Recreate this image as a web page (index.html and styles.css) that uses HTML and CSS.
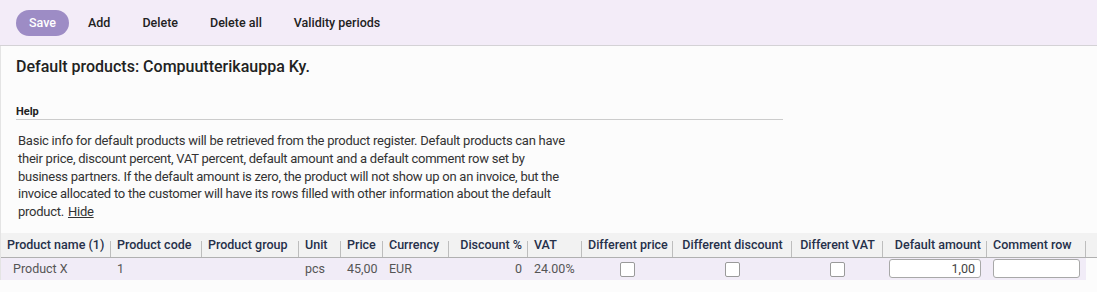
FILE: index.html
```html
<!DOCTYPE html>
<html lang="en">
<head>
<meta charset="utf-8">
<title>Default products</title>
<link rel="stylesheet" href="styles.css">
</head>
<body>
<div class="toolbar">
  <button class="btn btn-primary">Save</button>
  <button class="btn">Add</button>
  <button class="btn">Delete</button>
  <button class="btn">Delete all</button>
  <button class="btn">Validity periods</button>
</div>
<div class="page">
  <div class="content">
    <h1 class="title">Default products: Compuutterikauppa Ky.</h1>
    <div class="help">
      <div class="help-head">Help</div>
      <p class="help-text">Basic info for default products will be retrieved from the product register. Default products can have their price, discount percent, VAT percent, default amount and a default comment row set by business partners. If the default amount is zero, the product will not show up on an invoice, but the invoice allocated to the customer will have its rows filled with other information about the default product.<a class="hide-link" href="#">Hide</a></p>
    </div>
  </div>
  <table class="grid">
    <colgroup>
      <col style="width:110px"><col style="width:91px"><col style="width:97px"><col style="width:42px"><col style="width:42px"><col style="width:66px"><col style="width:79px"><col style="width:54px"><col style="width:91px"><col style="width:119px"><col style="width:91px"><col style="width:104px"><col style="width:99px"><col>
    </colgroup>
    <thead>
      <tr>
        <th>Product name (1)</th>
        <th>Product code</th>
        <th>Product group</th>
        <th>Unit</th>
        <th>Price</th>
        <th>Currency</th>
        <th class="r">Discount %</th>
        <th>VAT</th>
        <th class="c">Different price</th>
        <th class="c">Different discount</th>
        <th class="c">Different VAT</th>
        <th class="r">Default amount</th>
        <th>Comment row</th>
        <th class="gutter"></th>
      </tr>
    </thead>
    <tbody>
      <tr>
        <td class="first">Product X</td>
        <td>1</td>
        <td></td>
        <td>pcs</td>
        <td>45,00</td>
        <td>EUR</td>
        <td class="r">0</td>
        <td>24.00%</td>
        <td class="c"><span class="check"></span></td>
        <td class="c"><span class="check"></span></td>
        <td class="c"><span class="check"></span></td>
        <td class="inp"><input class="field num" type="text" value="1,00"></td>
        <td class="inp"><input class="field" type="text" value=""></td>
        <td class="gutter"></td>
      </tr>
    </tbody>
  </table>
</div>
</body>
</html>
```
FILE: styles.css
```css
html, body {
  margin: 0;
  padding: 0;
  background: #fcfcfc;
  font-family: Roboto, "Open Sans", sans-serif;
  color: #222;
}

.toolbar {
  height: 45px;
  background: #f3ecf8;
  border-bottom: 1px solid #d4d2d6;
  display: flex;
  align-items: center;
  padding-left: 16px;
}

.btn {
  font-family: inherit;
  font-size: 12.5px;
  font-weight: 500;
  color: #222;
  background: transparent;
  border: 0;
  height: 26px;
  padding: 0 16px;
  cursor: pointer;
}

.btn-primary {
  background: #9d8cc5;
  color: #fff;
  border-radius: 13px;
  width: 53px;
  padding: 0;
  margin-right: 3px;
}

.page {
  border-left: 1px solid #e4e4e4;
}

.content {
  padding: 0 15px;
}

.title {
  margin: 0;
  padding-top: 11px;
  font-size: 16px;
  font-weight: 500;
  line-height: 20px;
  color: #222;
}

.help {
  width: 767px;
  margin-top: 27px;
}

.help-head {
  font-size: 11px;
  font-weight: 700;
  line-height: 15px;
  padding-bottom: 0;
  border-bottom: 1px solid #cccccc;
}

.help-text {
  margin: 12px 0 0 2px;
  width: 556px;
  font-size: 13px;
  letter-spacing: -0.25px;
  line-height: 17.8px;
  color: #333;
}

.hide-link {
  margin-left: 4px;
  color: #333;
  text-decoration: underline;
}

.grid {
  margin-top: 12px;
  width: 100%;
  border-collapse: collapse;
  table-layout: fixed;
  font-size: 12.5px;
}

.grid th {
  background: #f2f2f2;
  font-weight: 500;
  color: #26304a;
  text-align: left;
  height: 24px;
  padding: 0 6px;
  white-space: nowrap;
  border-bottom: 1px solid #b0b0b0;
  position: relative;
}

.grid th::after {
  content: "";
  position: absolute;
  right: 0;
  bottom: 0;
  height: 16px;
  border-right: 1px solid #bdbdbd;
}

.grid th.gutter::after {
  display: none;
}

.grid td {
  background: #f1ecf7;
  color: #555;
  height: 22px;
  padding: 0 6px;
  white-space: nowrap;
}

.grid td.gutter {
  background: transparent;
}

.grid td.first {
  padding-left: 12px;
}

.grid .r { text-align: right; }
.grid .c { text-align: center; }

.check {
  display: inline-block;
  width: 13px;
  height: 13px;
  border: 1px solid #9a9a9a;
  border-radius: 2px;
  background: #fff;
  vertical-align: middle;
}

.field {
  display: block;
  box-sizing: border-box;
  width: 100%;
  height: 19px;
  border: 1px solid #a8a8a8;
  border-radius: 3px;
  background: #fff;
  font-family: inherit;
  font-size: 12.5px;
  color: #444;
  padding: 0 5px;
}

.field.num {
  text-align: right;
}
```
